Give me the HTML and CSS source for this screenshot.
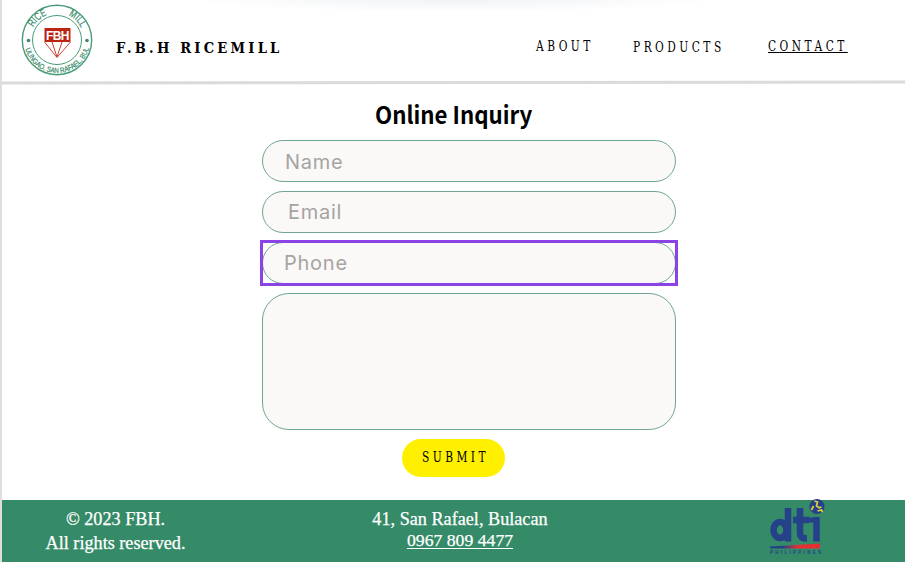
FILE: index.html
```html
<!DOCTYPE html>
<html lang="en">
<head>
<meta charset="utf-8">
<title>F.B.H Ricemill</title>
<link rel="stylesheet" href="styles.css">
</head>
<body>
<header class="header">
  <svg class="logo" viewBox="0 0 74 74" width="74" height="74">
    <defs>
      <path id="top" d="M10 37a27 27 0 0 1 54 0"/>
      <path id="bottom" d="M4 37a33 33 0 0 0 66 0"/>
    </defs>
    <g fill="none" stroke="#479b78">
      <circle cx="37" cy="37" r="34.7" stroke-width="1.4"/>
      <circle cx="37" cy="37" r="24.5"/>
    </g>
    <circle cx="8.5" cy="37.5" r="1.8" fill="#398c69"/>
    <circle cx="67" cy="37.5" r="1.8" fill="#398c69"/>
    <g class="seal">
      <text font-size="10.5"><textPath href="#top" startOffset="13" textLength="19" lengthAdjust="spacingAndGlyphs">RICE</textPath></text>
      <text font-size="10.5"><textPath href="#top" startOffset="54" textLength="18" lengthAdjust="spacingAndGlyphs">MILL</textPath></text>
      <text font-size="7.5"><textPath href="#bottom" startOffset="9" textLength="86" lengthAdjust="spacingAndGlyphs">ULINGAO, SAN RAFAEL, BUL</textPath></text>
    </g>
    <path d="M24.500 25h26v14h-26z" fill="#bd2412"/>
    <text class="mark" x="26" y="36.500" textLength="23.500">FBH</text>
    <path d="M24.500 39L37 54.500 50.500 39M32 39l5 15 5-15" fill="none" stroke="#c94435"/>
  </svg>
  <h1 class="brand">F.B.H RICEMILL</h1>
  <nav class="nav">
    <a class="about">ABOUT</a>
    <a class="products">PRODUCTS</a>
    <a class="contact">CONTACT</a>
  </nav>
</header>
<div class="rule"></div>
<main class="main">
  <h2 class="title">Online Inquiry</h2>
  <form class="form">
    <div class="field name"><span>Name</span></div>
    <div class="field email"><span>Email</span></div>
    <div class="field phone"><span>Phone</span></div>
    <div class="message"></div>
    <div class="submit"><span>SUBMIT</span></div>
  </form>
</main>
<footer class="footer">
  <p class="rights"><span>© 2023 FBH.</span><br><span>All rights reserved.</span></p>
  <p class="address">41, San Rafael, Bulacan<br><a class="tel">0967 809 4477</a></p>
  <svg class="dti" viewBox="0 0 60 60" width="60" height="60">
    <defs><linearGradient id="bar"><stop offset=".25" stop-color="#24418a"/><stop offset=".55" stop-color="#e52f35"/></linearGradient></defs>
    <g fill="none" stroke="#24418a" stroke-width="6.500">
      <ellipse cx="12" cy="32" rx="6.500" ry="8"/>
      <path d="M20 10v33.500M32 10v25q0 5.500 7 5.500M25 22h16M48.500 19v24.500"/>
      <path d="M41 22h8" stroke-width="5"/>
    </g>
    <circle cx="49" cy="8.500" r="7.500" fill="#24418a"/>
    <path d="M46.500 3l3 1-1 4 3 2M50.500 10l3-1M49.500 13l4-1 1 2M45.500 8l-2 4" fill="none" stroke="#e5cf35" stroke-width="1.700"/>
    <path d="M2 48.500l50-3v5H2z" fill="url(#bar)"/>
    <text class="country" x="2" y="56" textLength="51">PHILIPPINES</text>
  </svg>
</footer>
</body>
</html>
```
FILE: styles.css
```css
* { box-sizing: border-box; }
body {
  margin: 0;
  height: 562px;
  overflow: hidden;
  border-left: 2px solid #dedede;
  background: #fff;
  display: flex;
  flex-direction: column;
  font-family: "Liberation Sans", sans-serif;
}
h1, h2, p { margin: 0; }
.header {
  height: 81px;
  flex: none;
  display: flex;
  padding-left: 18px;
  background: radial-gradient(ellipse 270px 14px at 452px -2px, #eff1f4, #fff);
}
.logo { margin-top: 3px; flex: none; }
.seal { font-family: "Liberation Sans", sans-serif; fill: #398c69; stroke: #398c69; stroke-width: .2px; }
.mark { font: bold 12px "Liberation Sans", sans-serif; fill: #fff; }
.brand {
  margin: 38px 0 0 22px;
  width: 168px;
  font: bold 15px/20px "DejaVu Serif Condensed", "DejaVu Serif", serif;
  font-stretch: condensed;
  letter-spacing: 3.3px;
  white-space: nowrap;
  transform: scaleX(.972);
  transform-origin: 0 0;
}
.nav { display: flex; flex: 1; margin-left: 252px; }
.nav a, .submit span {
  font: 14px/20px "DejaVu Serif Condensed", "DejaVu Serif", serif;
  font-stretch: condensed;
  letter-spacing: 4.100px;
  white-space: nowrap;
  transform: scaleX(.845);
  transform-origin: 0 0;
}
.nav a { margin-top: 36px; }
.nav .about { width: 97px; }
.nav .products { width: 135px; margin-top: 37px; }
.nav .contact { width: 80px; text-decoration: underline; text-underline-offset: 1px; }
.rule {
  height: 3px;
  flex: none;
  background: #dadada;
  transform: rotate(-.06deg);
}
.main { display: flex; flex-direction: column; height: 416px; }
.title {
  margin: 12px 0 0 373px;
  font: bold 24px/35px "Noto Sans CJK SC", "Noto Sans", sans-serif;
  white-space: nowrap;
  transform: scaleX(.929);
  transform-origin: 0 0;
}
.form { width: 414px; margin: 9px 0 0 260px; }
.field {
  height: 42px;
  margin-bottom: 9px;
  border: 1px solid #70a78f;
  border-radius: 21px;
  background: #faf9f8;
  padding-left: 22px;
  font: 20px/42px Inter, sans-serif;
  letter-spacing: .75px;
  color: #a6a4a2;
}
.email { padding-left: 25px; line-height: 41px; }
.phone {
  position: relative;
  padding-left: 22px;
  border: 0;
  border-radius: 0;
  background: none;
  outline: 3px solid #8b43e6;
  outline-offset: -1px;
}
.phone::before {
  content: "";
  position: absolute;
  inset: 0;
  z-index: -1;
  border: 1px solid #70a78f;
  border-radius: 21px;
  background: #faf9f8;
}
.message { height: 137px; border: 1px solid #70a78f; border-radius: 27px; background: #faf9f8; }
.submit {
  width: 103px;
  height: 38px;
  margin: 9px 0 0 140px;
  padding: 8px 0 0 20px;
  border-radius: 19px;
  background: #fff000;
}
.submit span { display: block; }
.footer {
  height: 62px;
  flex: none;
  display: flex;
  background: #358a67;
  color: #fff;
  font: 18.200px/24px "Liberation Serif", serif;
  -webkit-text-stroke: .25px #fff;
}
.rights { width: 227px; padding-top: 7px; text-align: center; white-space: nowrap; }
.address { width: 232px; margin-left: 115px; padding-top: 9px; line-height: 21px; text-align: center; white-space: nowrap; }
.tel { font-size: 17.700px; text-decoration: underline; text-underline-offset: 2px; }
.dti { margin: -2px 0 0 192px; overflow: visible; -webkit-text-stroke: 0; }
.country { font: bold 4.500px "Liberation Sans", sans-serif; fill: #24418a; }
```
